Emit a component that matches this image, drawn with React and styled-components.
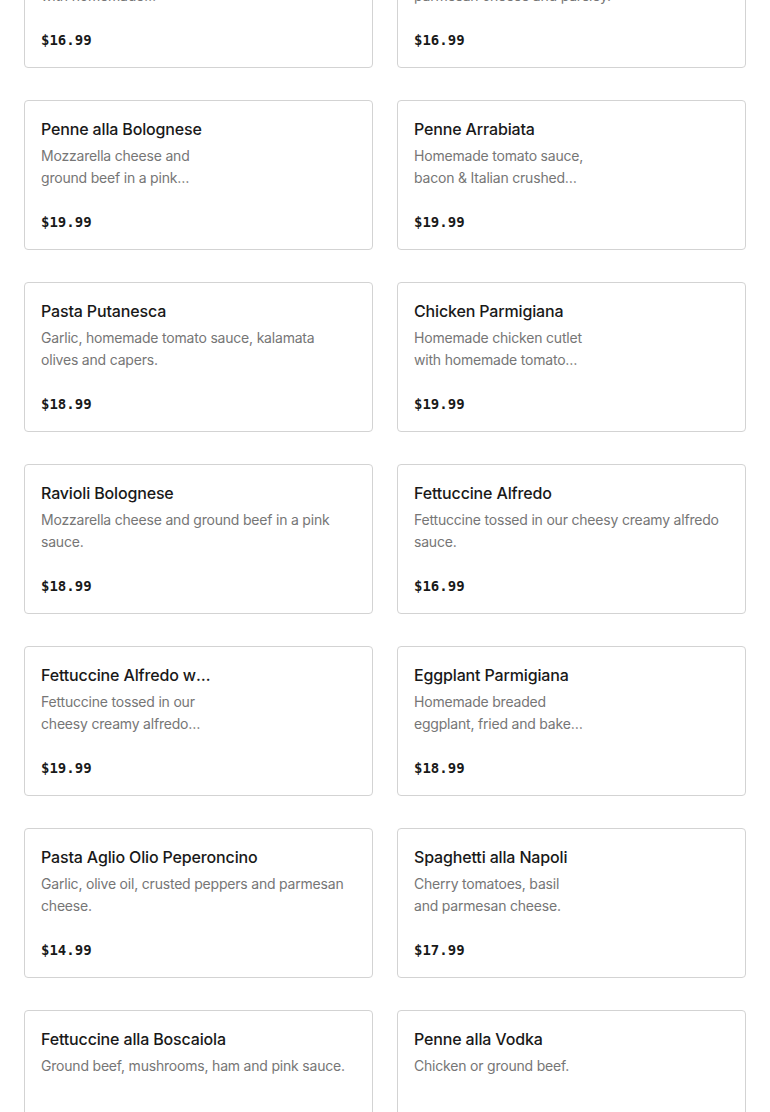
import React from 'react';
import styled, { createGlobalStyle } from 'styled-components';

const GlobalStyle = createGlobalStyle`
    html, body {
        margin: 0;
        padding: 0;
        background: #ffffff;
    }
    body {
        font-family: Inter, "Noto Sans", sans-serif;
        color: #191919;
        overflow: hidden;
    }
`

const Menu = styled.main`
    display: grid;
    grid-template-columns: 1fr 1fr;
    column-gap: 24px;
    row-gap: 32px;
    padding: 0 24px;
    margin-top: -82px;
`

const Card = styled.article`
    box-sizing: border-box;
    height: 150px;
    display: flex;
    flex-direction: column;
    padding: 16px 20px 0 16px;
    border: 1px solid #d3d3d3;
    border-radius: 4px;
    background: #ffffff;
`

const Title = styled.h3`
    margin: 0;
    font-size: 16px;
    line-height: 24px;
    font-weight: 500;
    letter-spacing: -0.15px;
    color: #191919;
    max-width: ${props => props.narrow ? '170px' : '100%'};
    white-space: nowrap;
    overflow: hidden;
    text-overflow: ellipsis;
`

const Description = styled.p`
    margin: 4px 0 0;
    font-size: 14px;
    line-height: 22px;
    letter-spacing: -0.2px;
    color: #767676;
    max-width: ${props => props.narrow ? '170px' : '100%'};
    display: -webkit-box;
    -webkit-line-clamp: 2;
    -webkit-box-orient: vertical;
    overflow: hidden;
    height: 44px;
`

const Price = styled.span`
    margin-top: auto;
    margin-bottom: 17px;
    font-family: "DejaVu Sans Mono", "Liberation Mono", monospace;
    font-size: 14px;
    line-height: 20px;
    font-weight: bold;
    color: #191919;
`

const items = [
    { name: 'Spaghetti and Meatballs', desc: 'Homemade tomato sauce with homemade meatballs, parmesan cheese.', price: '$16.99', narrow: true },
    { name: 'Linguine with Clams', desc: 'Clams sauteed in garlic, white wine sauce, parmesan cheese and parsley.', price: '$16.99' },
    { name: 'Penne alla Bolognese', desc: 'Mozzarella cheese and ground beef in a pink sauce.', price: '$19.99', narrow: true },
    { name: 'Penne Arrabiata', desc: 'Homemade tomato sauce, bacon & Italian crushed red pepper.', price: '$19.99', narrow: true },
    { name: 'Pasta Putanesca', desc: 'Garlic, homemade tomato sauce, kalamata olives and capers.', price: '$18.99' },
    { name: 'Chicken Parmigiana', desc: 'Homemade chicken cutlet with homemade tomato sauce and mozzarella.', price: '$19.99', narrow: true },
    { name: 'Ravioli Bolognese', desc: 'Mozzarella cheese and ground beef in a pink sauce.', price: '$18.99' },
    { name: 'Fettuccine Alfredo', desc: 'Fettuccine tossed in our cheesy creamy alfredo sauce.', price: '$16.99' },
    { name: 'Fettuccine Alfredo with Chicken', desc: 'Fettuccine tossed in our cheesy creamy alfredo sauce with chicken.', price: '$19.99', narrow: true },
    { name: 'Eggplant Parmigiana', desc: 'Homemade breaded eggplant, fried and baked with mozzarella.', price: '$18.99', narrow: true },
    { name: 'Pasta Aglio Olio Peperoncino', desc: 'Garlic, olive oil, crusted peppers and parmesan cheese.', price: '$14.99' },
    { name: 'Spaghetti alla Napoli', desc: 'Cherry tomatoes, basil and parmesan cheese.', price: '$17.99', narrow: true },
    { name: 'Fettuccine alla Boscaiola', desc: 'Ground beef, mushrooms, ham and pink sauce.', price: '$17.99' },
    { name: 'Penne alla Vodka', desc: 'Chicken or ground beef.', price: '$17.99' },
];

const App = () => {
    return (
        <>
            <GlobalStyle />
            <Menu>
                {items.map((item, i) => (
                    <Card key={i}>
                        <Title narrow={item.narrow}>{item.name}</Title>
                        <Description narrow={item.narrow}>{item.desc}</Description>
                        <Price>{item.price}</Price>
                    </Card>
                ))}
            </Menu>
        </>
    )
}

export default App;
